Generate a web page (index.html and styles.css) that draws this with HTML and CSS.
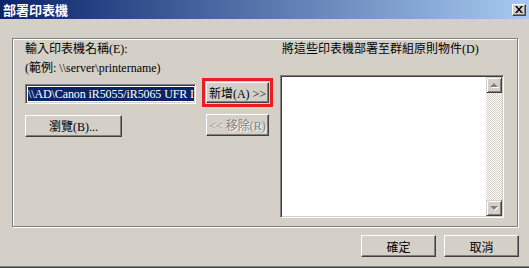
FILE: index.html
```html
<!DOCTYPE html>
<html lang="zh-Hant">
<head>
    <meta charset="UTF-8">
    <title>部署印表機</title>
    <link rel="stylesheet" href="styles.css">
</head>
<body>
    <div class="window">
        <div class="titlebar">
            <span class="title">部署印表機</span>
            <span class="close-btn">
                <svg width="8" height="7" viewBox="0 0 8 7">
                    <path d="M0 0h2l2 2.5l2-2.5h2l-3 3.5l3 3.5h-2l-2-2.5l-2 2.5h-2l3-3.5z" fill="#000"/>
                </svg>
            </span>
        </div>

        <div class="content">
            <div class="group">
                <div class="col-left">
                    <div class="label">輸入印表機名稱(E):</div>
                    <div class="label hint">(範例: \\server\printername)</div>
                    <div class="field">
                        <div class="selected">\\AD\Canon iR5055/iR5065 UFR I</div>
                    </div>
                    <button class="btn browse">瀏覽(B)...</button>
                </div>

                <div class="col-mid">
                    <div class="highlight">
                        <button class="btn add">新增(A) &gt;&gt;</button>
                    </div>
                    <button class="btn remove" disabled>&lt;&lt; 移除(R)</button>
                </div>

                <div class="col-right">
                    <div class="label">將這些印表機部署至群組原則物件(D)</div>
                    <div class="listbox">
                        <div class="list-area"></div>
                        <div class="scrollbar">
                            <span class="arrow up"></span>
                            <span class="track"></span>
                            <span class="arrow down"></span>
                        </div>
                    </div>
                </div>
            </div>

            <div class="actions">
                <button class="btn dlg">確定</button>
                <button class="btn dlg">取消</button>
            </div>
        </div>
    </div>
</body>
</html>
```

FILE: styles.css
```css
body {
    margin: 0;
    background: #d4d0c8;
    font-family: "Liberation Serif", "Noto Sans CJK TC", serif;
    font-size: 12px;
    color: #000;
}
.window {
    width: 529px;
    height: 268px;
    box-sizing: border-box;
    background: #d4d0c8;
    border-bottom: 1px solid #404040;
    box-shadow: inset 0 -1px 0 #808080;
}
.titlebar {
    height: 19px;
    display: flex;
    align-items: center;
    justify-content: space-between;
    padding: 0 3px 0 3px;
    background: linear-gradient(to right, #0a246a, #a6caf0);
}
.title {
    color: #fff;
    font-family: "Noto Sans CJK TC", sans-serif;
    font-weight: bold;
    font-size: 13px;
    line-height: 19px;
}
.close-btn {
    width: 14px;
    height: 12px;
    box-sizing: border-box;
    display: flex;
    align-items: center;
    justify-content: center;
    background: #d4d0c8;
    border: 1px solid;
    border-color: #fff #404040 #404040 #fff;
    box-shadow: inset -1px -1px 0 #808080;
}
.content {
    padding: 19px 11px 0 12px;
}
.group {
    width: 506px;
    height: 189px;
    box-sizing: border-box;
    border: 1px solid #808080;
    box-shadow: 1px 1px 0 #fff, inset 1px 1px 0 #fff;
    padding: 2px 0 0 12px;
    display: flex;
}
.label {
    line-height: 16px;
    white-space: nowrap;
}
.hint {
    margin-top: 3px;
}
.col-left {
    width: 171px;
    display: flex;
    flex-direction: column;
}
.field {
    margin-top: 8px;
    height: 20px;
    box-sizing: border-box;
    background: #fff;
    border: 1px solid;
    border-color: #808080 #fff #fff #808080;
    box-shadow: inset 1px 1px 0 #404040, inset -1px -1px 0 #d4d0c8;
    padding: 2px 1px 0 2px;
    overflow: hidden;
}
.selected {
    height: 14px;
    line-height: 14px;
    background: #0a246a;
    color: #fff;
    white-space: nowrap;
    overflow: hidden;
    letter-spacing: -0.1px;
}
.btn {
    font: inherit;
    color: #000;
    background: #d4d0c8;
    border: 1px solid;
    border-color: #fff #404040 #404040 #fff;
    box-shadow: inset -1px -1px 0 #808080;
    padding: 0;
    box-sizing: border-box;
    height: 22px;
}
.browse {
    margin-top: 11px;
    width: 97px;
}
.col-mid {
    margin-left: 6px;
    width: 71px;
    display: flex;
    flex-direction: column;
    padding-top: 37px;
}
.highlight {
    border: 3px solid #ed1c24;
    padding: 1px;
    height: 29px;
    box-sizing: border-box;
}
.add {
    width: 63px;
    height: 21px;
    display: block;
}
.remove {
    margin: 7px 0 0 4px;
    width: 63px;
    color: #808080;
    text-shadow: 1px 1px 0 #fff;
}
.col-right {
    margin-left: 7px;
    display: flex;
    flex-direction: column;
}
.col-right .label {
    padding-left: 2px;
}
.listbox {
    margin-top: 18px;
    width: 224px;
    height: 143px;
    box-sizing: border-box;
    display: flex;
    background: #fff;
    border: 1px solid;
    border-color: #808080 #fff #fff #808080;
    box-shadow: inset 1px 1px 0 #404040, inset -1px -1px 0 #d4d0c8;
    padding: 1px;
}
.list-area {
    flex: 1;
}
.scrollbar {
    width: 16px;
    display: flex;
    flex-direction: column;
}
.track {
    flex: 1;
    background-image: conic-gradient(#d4d0c8 25%, #fff 0 50%, #d4d0c8 0 75%, #fff 0);
    background-size: 2px 2px;
}
.arrow {
    height: 16px;
    box-sizing: border-box;
    background: #d4d0c8;
    border: 1px solid;
    border-color: #d4d0c8 #404040 #404040 #d4d0c8;
    box-shadow: inset 1px 1px 0 #fff, inset -1px -1px 0 #808080;
    display: flex;
    align-items: center;
    justify-content: center;
}
.arrow::after {
    content: "";
    border-left: 4px solid transparent;
    border-right: 4px solid transparent;
}
.up::after {
    border-bottom: 4px solid #808080;
    filter: drop-shadow(1px 1px 0 #fff);
}
.down::after {
    border-top: 4px solid #808080;
    filter: drop-shadow(1px 1px 0 #fff);
}
.actions {
    display: flex;
    justify-content: flex-end;
    gap: 8px;
    margin: 8px -1px 0 0;
}
.dlg {
    width: 75px;
    height: 22px;
    font-family: "Noto Sans CJK TC", sans-serif;
}
```
